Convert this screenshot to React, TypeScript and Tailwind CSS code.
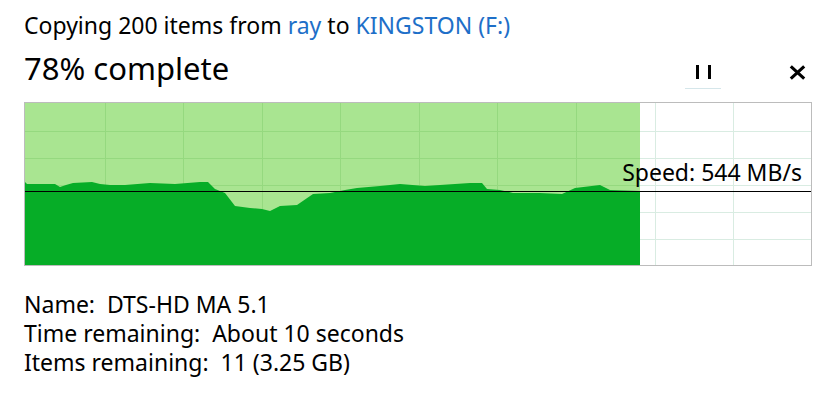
import React from "react";

const pts: [number, number][] = [
  [0, 79], [2, 81], [30, 81], [35, 84], [41, 82], [48, 80], [67, 79], [75, 81], [85, 82],
  [100, 82], [125, 80], [150, 81], [175, 79], [183, 79], [190, 86], [200, 90], [210, 103],
  [225, 105], [237, 106], [245, 108], [255, 103], [272, 102], [288, 91], [305, 90],
  [320, 87], [332, 85], [355, 83], [375, 81], [400, 83], [415, 82], [445, 80], [457, 80],
  [462, 86], [475, 87], [488, 90], [515, 90], [537, 91], [550, 85], [575, 82], [585, 87],
  [615, 88],
];

function Chart() {
  const W = 786;
  const H = 162;
  const fillW = 615;
  const vx = [80, 158, 237, 315, 394, 472, 551, 630, 708];
  const hy = [28, 55, 82, 109, 136];
  const poly = [...pts, [fillW, H], [0, H]].map((p) => p.join(",")).join(" ");
  return (
    <svg width={W} height={H} className="block" shapeRendering="crispEdges">
      <rect x={0} y={0} width={W} height={H} fill="#ffffff" />
      {vx.map((x) => (
        <line key={"v" + x} x1={x + 0.5} y1={0} x2={x + 0.5} y2={H} stroke="#d9ece2" strokeWidth={1} />
      ))}
      {hy.map((y) => (
        <line key={"h" + y} x1={0} y1={y + 0.5} x2={W} y2={y + 0.5} stroke="#d9ece2" strokeWidth={1} />
      ))}
      <rect x={0} y={0} width={fillW} height={H} fill="#a9e591" />
      {vx
        .filter((x) => x < fillW)
        .map((x) => (
          <line key={"gv" + x} x1={x + 0.5} y1={0} x2={x + 0.5} y2={H} stroke="#95d97f" strokeWidth={1} />
        ))}
      {hy.map((y) => (
        <line key={"gh" + y} x1={0} y1={y + 0.5} x2={fillW} y2={y + 0.5} stroke="#95d97f" strokeWidth={1} />
      ))}
      <polygon points={poly} fill="#06ad27" shapeRendering="auto" />
      <line x1={0} y1={88.5} x2={W} y2={88.5} stroke="#000000" strokeWidth={1} />
    </svg>
  );
}

export default function App() {
  return (
    <div
      className="w-[835px] h-[409px] bg-white text-black pl-6 pt-[9px]"
      style={{ fontFamily: '"Noto Sans", "Open Sans", sans-serif' }}
    >
      <div className="text-[23px] leading-[32px] whitespace-nowrap">
        Copying 200 items from <span className="text-[#1e6fc8]">ray</span> to{" "}
        <span className="text-[#1e6fc8]">KINGSTON (F:)</span>
      </div>
      <div className="flex items-start h-[54px] mt-[7px]">
        <div className="text-[31px] leading-[40px] flex-1 whitespace-nowrap">78% complete</div>
        <div className="flex flex-col items-center w-[36px] pt-[17px]">
          <div className="flex gap-[9px] h-[14px]">
            <div className="w-[3px] h-[14px] bg-black" />
            <div className="w-[3px] h-[14px] bg-black" />
          </div>
          <div className="w-[36px] h-[1px] bg-[#d5e6ea] mt-[9px]" />
        </div>
        <div className="ml-[68px] mr-[29px] pt-[17px]">
          <svg width="17" height="15" viewBox="0 0 17 15" className="block">
            <path d="M1.8 1.3 L15.2 13.7 M15.2 1.3 L1.8 13.7" stroke="#000" strokeWidth="3.1" strokeLinecap="butt" />
          </svg>
        </div>
      </div>
      <div className="relative w-[788px] h-[164px] border border-[#bcbcbc]">
        <Chart />
        <div className="absolute right-[9px] top-[53px] text-[23px] leading-[32px] whitespace-nowrap">
          Speed: 544 MB/s
        </div>
      </div>
      <div className="mt-[24px] text-[23px] leading-[29px] whitespace-nowrap">
        <div>Name:&nbsp; DTS-HD MA 5.1</div>
        <div>Time remaining:&nbsp; About 10 seconds</div>
        <div>Items remaining:&nbsp; 11 (3.25 GB)</div>
      </div>
    </div>
  );
}
